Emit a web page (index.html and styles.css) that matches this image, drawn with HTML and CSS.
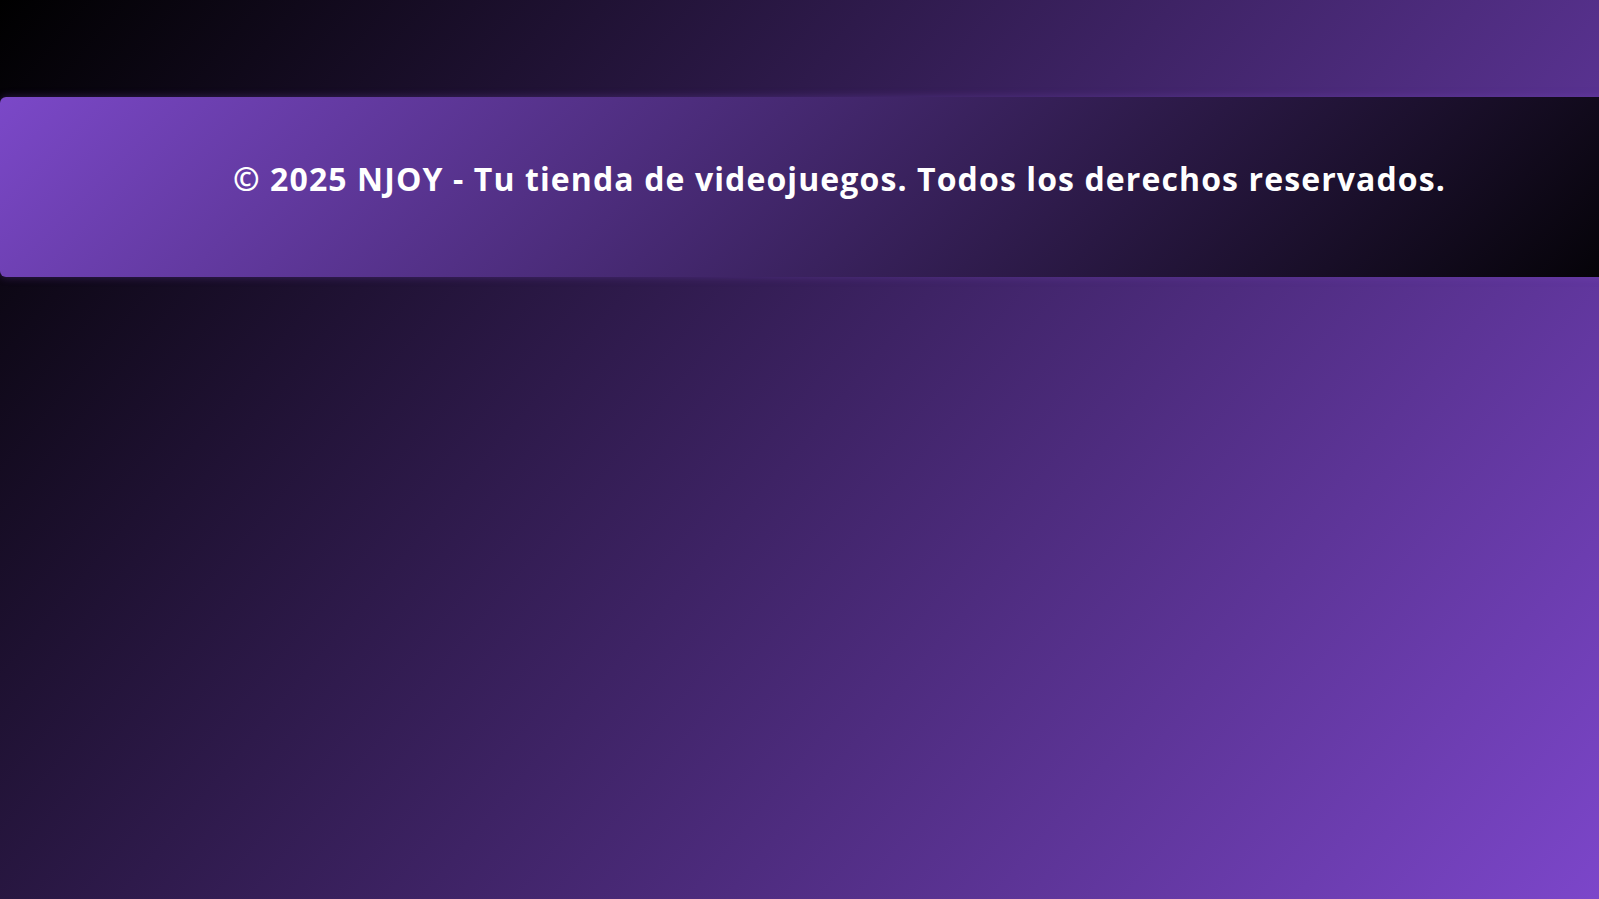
FILE: index.html
```html
<!DOCTYPE html>
<html lang="es">
<head>
<meta charset="utf-8">
<title>NJOY</title>
<link rel="stylesheet" href="styles.css">
</head>
<body>
  <main class="page">
    <footer class="site-footer">
      <p class="footer-text">© 2025 NJOY - Tu tienda de videojuegos. Todos los derechos reservados.</p>
    </footer>
  </main>
</body>
</html>
```

FILE: styles.css
```css
html {
  min-height: 100%;
  background: linear-gradient(130deg, #000000 0%, #7c46ca 100%) no-repeat;
  background-color: #7c46ca;
}

body {
  margin: 0;
  min-height: 100vh;
  overflow: hidden;
  font-family: "Open Sans", "Liberation Sans", sans-serif;
  color: #ffffff;
}

.page {
  padding-top: 97px;
}

.site-footer {
  width: 100%;
  box-sizing: content-box;
  padding: 60px 40px 76px;
  border-radius: 6px;
  background: linear-gradient(135deg, #7b48c8 0%, #000000 100%);
  box-shadow: 0 0 8px rgba(123, 72, 200, 0.35);
  text-align: center;
}

.footer-text {
  margin: 0;
  font-size: 32px;
  font-weight: 700;
  letter-spacing: 1.1px;
  line-height: 1.362;
}
```
